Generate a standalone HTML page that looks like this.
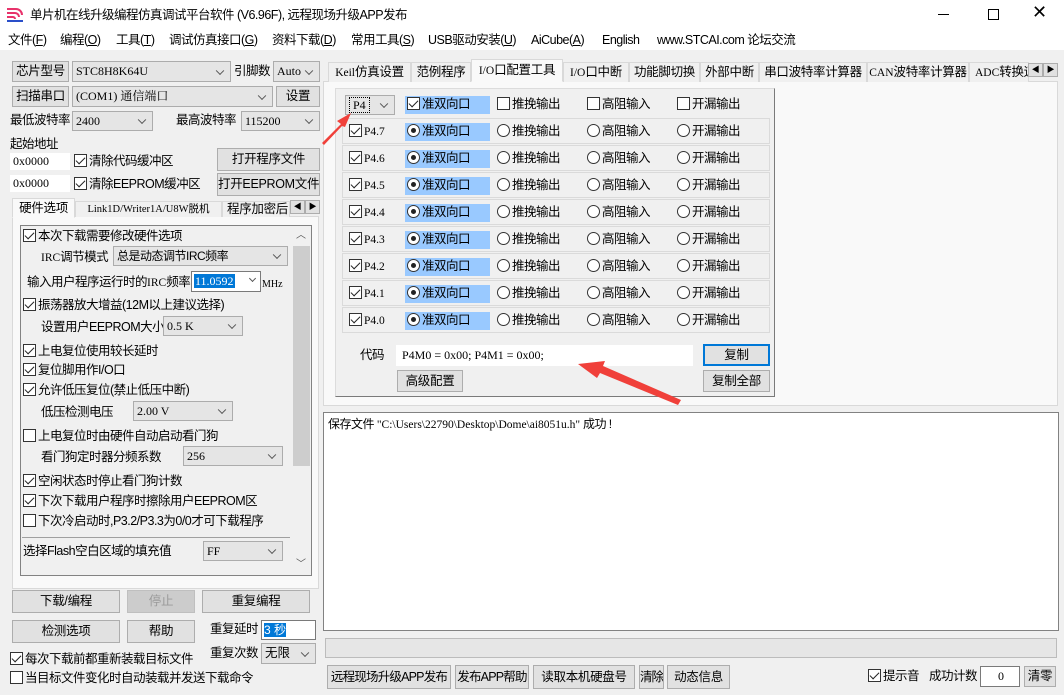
<!DOCTYPE html>
<html><head><meta charset="utf-8">
<style>
*{box-sizing:border-box;margin:0;padding:0}
body{width:1064px;height:695px;overflow:hidden;background:#f0f0f0;font-family:"Liberation Sans","Noto Sans CJK SC",sans-serif;font-size:12.5px;line-height:15px;color:#000;position:relative}
.a{position:absolute;white-space:nowrap;line-height:15px}
.btn{position:absolute;background:#e1e1e1;border:1px solid #adadad;text-align:center;font-size:12.5px;white-space:nowrap;overflow:hidden;letter-spacing:-0.3px}
.cmb{position:absolute;background:#e5e5e5;border:1px solid #acacac;font-family:"Liberation Serif","Noto Serif CJK SC",serif;font-size:12px;padding-left:3px;white-space:nowrap;overflow:hidden}
.cmb:after{content:"";position:absolute;right:7px;top:50%;width:5px;height:5px;border-right:1px solid #555;border-bottom:1px solid #555;transform:translateY(-70%) rotate(45deg)}
.ed{position:absolute;background:#fff;border:1px solid #7a7a7a;font-family:"Liberation Serif",serif;font-size:12px;padding-left:2px;white-space:nowrap}
.cb{display:inline-block;width:13px;height:13px;border:1px solid #333;background:#fff;vertical-align:-2px;position:relative;margin-right:2px}
.cb.k:after{content:"";position:absolute;left:3px;top:0px;width:4px;height:8px;border-right:1.5px solid #222;border-bottom:1.5px solid #222;transform:rotate(45deg)}
.rb{display:inline-block;width:13px;height:13px;border:1px solid #333;border-radius:50%;background:#fff;vertical-align:-2px;position:relative;margin-right:2px}
.rb.k:after{content:"";position:absolute;left:3px;top:3px;width:5px;height:5px;border-radius:50%;background:#222}
.tab{position:absolute;border:1px solid #d9d9d9;border-bottom:none;background:#f0f0f0;text-align:center;font-size:12.5px;top:0;white-space:nowrap;overflow:hidden;letter-spacing:-0.3px}
.row{position:absolute;left:342px;width:428px;height:26px;border:1px solid #dadada}
.sel{position:absolute;background:#99c9ff;height:18px}
.m{font-family:"Liberation Serif",serif;font-size:11.5px;letter-spacing:0}
.n{letter-spacing:-0.5px}
</style></head><body>
<div class="a" style="left:0;top:0;width:1064px;height:30px;background:#fff"></div>
<svg class="a" style="left:6px;top:7px" width="18" height="16"><path d="M1 2h9a6 6 0 0 1 6 6" stroke="#e8336b" stroke-width="2" fill="none"/><path d="M1 6h8a4 4 0 0 1 4 4" stroke="#e8336b" stroke-width="2" fill="none"/><path d="M1 10h6a2 2 0 0 1 2 2" stroke="#e8336b" stroke-width="2" fill="none"/><path d="M1 14h16" stroke="#2a4fc9" stroke-width="2"/></svg>
<div class="a n" style="left:30px;top:8px">单片机在线升级编程仿真调试平台软件 (V6.96F), 远程现场升级APP发布</div>
<div class="a" style="left:938px;top:14px;width:11px;border-top:1px solid #000"></div>
<div class="a" style="left:988px;top:9px;width:11px;height:11px;border:1px solid #000"></div>
<div class="a" style="left:1032px;top:5px;font-size:18px">✕</div>
<div class="a" style="left:0;top:30px;width:1064px;height:20px;background:#fff"></div>
<div class="a n" style="left:8px;top:33px">文件(<u>F</u>)</div>
<div class="a n" style="left:60px;top:33px">编程(<u>O</u>)</div>
<div class="a n" style="left:116px;top:33px">工具(<u>T</u>)</div>
<div class="a n" style="left:169px;top:33px">调试仿真接口(<u>G</u>)</div>
<div class="a n" style="left:272px;top:33px">资料下载(<u>D</u>)</div>
<div class="a n" style="left:351px;top:33px">常用工具(<u>S</u>)</div>
<div class="a n" style="left:428px;top:33px">USB驱动安装(<u>U</u>)</div>
<div class="a n" style="left:531px;top:33px">AiCube(<u>A</u>)</div>
<div class="a n" style="left:602px;top:33px">English</div>
<div class="a n" style="left:657px;top:33px">www.STCAI.com 论坛交流</div>

<div class="btn" style="left:12px;top:61px;width:57px;height:21px;line-height:19px">芯片型号</div>
<div class="cmb" style="left:72px;top:61px;width:159px;height:21px;line-height:19px">STC8H8K64U</div>
<div class="a n" style="left:234px;top:64px">引脚数</div>
<div class="cmb" style="left:273px;top:61px;width:47px;height:21px;line-height:19px">Auto</div>
<div class="btn" style="left:12px;top:86px;width:57px;height:21px;line-height:19px">扫描串口</div>
<div class="cmb" style="left:72px;top:86px;width:201px;height:21px;line-height:19px">(COM1) 通信端口</div>
<div class="btn" style="left:276px;top:86px;width:44px;height:21px;line-height:19px">设置</div>
<div class="a n" style="left:10px;top:113px">最低波特率</div>
<div class="cmb" style="left:72px;top:111px;width:81px;height:20px;line-height:18px">2400</div>
<div class="a n" style="left:176px;top:113px">最高波特率</div>
<div class="cmb" style="left:241px;top:111px;width:79px;height:20px;line-height:18px">115200</div>
<div class="a n" style="left:10px;top:137px">起始地址</div>
<div class="ed" style="left:10px;top:153px;width:60px;height:17px;border-color:#fff;line-height:15px">0x0000</div>
<div class="a n" style="left:74px;top:154px"><span class="cb k"></span>清除代码缓冲区</div>
<div class="btn" style="left:217px;top:148px;width:103px;height:23px;line-height:21px">打开程序文件</div>
<div class="ed" style="left:10px;top:175px;width:60px;height:17px;border-color:#fff;line-height:15px">0x0000</div>
<div class="a n" style="left:74px;top:177px"><span class="cb k"></span>清除EEPROM缓冲区</div>
<div class="btn" style="left:217px;top:173px;width:103px;height:23px;line-height:21px">打开EEPROM文件</div>

<div class="a" style="left:12px;top:216px;width:307px;height:373px;border:1px solid #d9d9d9;background:#f9f9f9"></div>
<div class="tab" style="left:12px;top:198px;width:63px;height:20px;background:#f9f9f9;line-height:18px;border-bottom:1px solid #f9f9f9">硬件选项</div>
<div class="tab m" style="left:75px;top:201px;width:147px;height:16px;line-height:15px;font-size:10.5px">Link1D/Writer1A/U8W脱机</div>
<div class="tab" style="left:222px;top:201px;width:68px;height:16px;line-height:15px;text-align:left;padding-left:4px">程序加密后</div>
<div class="btn" style="left:290px;top:200px;width:15px;height:14px;font-size:8px;line-height:12px">◀</div>
<div class="btn" style="left:305px;top:200px;width:15px;height:14px;font-size:8px;line-height:12px">▶</div>
<div class="a" style="left:20px;top:225px;width:292px;height:351px;border:1px solid #828282;background:#f0f0f0"></div>
<div class="a" style="left:293px;top:246px;width:17px;height:220px;background:#cdcdcd"></div>
<div class="a" style="left:296px;top:228px;font-size:10px;color:#555">︿</div>
<div class="a" style="left:296px;top:557px;font-size:10px;color:#555">﹀</div>
<div class="a n" style="left:23px;top:229px"><span class="cb k"></span>本次下载需要修改硬件选项</div>
<div class="a n" style="left:41px;top:250px"><span class="m">IRC</span>调节模式</div>
<div class="cmb n" style="left:113px;top:246px;width:175px;height:20px;line-height:18px;font-family:'Liberation Sans','Noto Sans CJK SC',sans-serif;font-size:12px">总是动态调节IRC频率</div>
<div class="a n" style="left:27px;top:275px">输入用户程序运行时的<span class="m">IRC</span>频率</div>
<div class="ed" style="left:191px;top:271px;width:70px;height:21px;border-color:#7a7a7a;line-height:19px"><span style="background:#0078d7;color:#fff;padding:0 1px">11.0592</span></div>
<div class="a" style="left:250px;top:276px;width:5px;height:5px;border-right:1px solid #555;border-bottom:1px solid #555;transform:rotate(45deg)"></div>
<div class="a m" style="left:262px;top:277px;font-size:10px">MHz</div>
<div class="a n" style="left:23px;top:298px"><span class="cb k"></span>振荡器放大增益(12M以上建议选择)</div>
<div class="a n" style="left:41px;top:320px">设置用户EEPROM大小</div>
<div class="cmb" style="left:163px;top:316px;width:80px;height:20px;line-height:18px">0.5 K</div>
<div class="a n" style="left:23px;top:344px"><span class="cb k"></span>上电复位使用较长延时</div>
<div class="a n" style="left:23px;top:363px"><span class="cb k"></span>复位脚用作I/O口</div>
<div class="a n" style="left:23px;top:383px"><span class="cb k"></span>允许低压复位(禁止低压中断)</div>
<div class="a n" style="left:41px;top:405px">低压检测电压</div>
<div class="cmb" style="left:133px;top:401px;width:100px;height:20px;line-height:18px">2.00 V</div>
<div class="a n" style="left:23px;top:429px"><span class="cb"></span>上电复位时由硬件自动启动看门狗</div>
<div class="a n" style="left:41px;top:450px">看门狗定时器分频系数</div>
<div class="cmb" style="left:183px;top:446px;width:100px;height:20px;line-height:18px">256</div>
<div class="a n" style="left:23px;top:474px"><span class="cb k"></span>空闲状态时停止看门狗计数</div>
<div class="a n" style="left:23px;top:494px"><span class="cb k"></span>下次下载用户程序时擦除用户EEPROM区</div>
<div class="a n" style="left:23px;top:514px"><span class="cb"></span>下次冷启动时,P3.2/P3.3为0/0才可下载程序</div>
<div class="a" style="left:22px;top:537px;width:268px;border-top:1px solid #a0a0a0"></div>
<div class="a n" style="left:23px;top:544px">选择Flash空白区域的填充值</div>
<div class="cmb" style="left:203px;top:541px;width:80px;height:20px;line-height:18px">FF</div>

<div class="btn" style="left:12px;top:590px;width:108px;height:23px;line-height:21px">下载/编程</div>
<div class="btn" style="left:127px;top:590px;width:68px;height:23px;line-height:21px;color:#9a9a9a;background:#ccc;border-color:#bfbfbf">停止</div>
<div class="btn" style="left:202px;top:590px;width:108px;height:23px;line-height:21px">重复编程</div>
<div class="btn" style="left:12px;top:620px;width:108px;height:23px;line-height:21px">检测选项</div>
<div class="btn" style="left:127px;top:620px;width:68px;height:23px;line-height:21px">帮助</div>
<div class="a n" style="left:210px;top:622px">重复延时</div>
<div class="ed" style="left:261px;top:620px;width:55px;height:20px;line-height:18px;font-family:'Liberation Sans','Noto Sans CJK SC',sans-serif"><span style="background:#0078d7;color:#fff">3 秒</span></div>
<div class="a n" style="left:210px;top:646px">重复次数</div>
<div class="cmb" style="left:261px;top:643px;width:55px;height:21px;line-height:19px;font-family:'Liberation Sans','Noto Sans CJK SC',sans-serif;font-size:12.5px">无限</div>
<div class="a n" style="left:10px;top:652px"><span class="cb k"></span>每次下载前都重新装载目标文件</div>
<div class="a n" style="left:10px;top:671px"><span class="cb"></span>当目标文件变化时自动装载并发送下载命令</div>

<div class="a" style="left:323px;top:81px;width:735px;height:325px;border:1px solid #d9d9d9;background:#f9f9f9"></div>
<div class="tab" style="left:328px;top:62px;width:83px;height:20px;line-height:19px"><span class="m">Keil</span>仿真设置</div>
<div class="tab" style="left:411px;top:62px;width:60px;height:20px;line-height:19px">范例程序</div>
<div class="tab" style="left:471px;top:59px;width:92px;height:23px;line-height:20px;background:#f9f9f9;border-bottom:1px solid #f9f9f9"><span class="m">I/O</span>口配置工具</div>
<div class="tab" style="left:563px;top:62px;width:66px;height:20px;line-height:19px"><span class="m">I/O</span>口中断</div>
<div class="tab" style="left:629px;top:62px;width:71px;height:20px;line-height:19px">功能脚切换</div>
<div class="tab" style="left:700px;top:62px;width:59px;height:20px;line-height:19px">外部中断</div>
<div class="tab" style="left:759px;top:62px;width:108px;height:20px;line-height:19px">串口波特率计算器</div>
<div class="tab" style="left:867px;top:62px;width:102px;height:20px;line-height:19px"><span class="m">CAN</span>波特率计算器</div>
<div class="tab" style="left:969px;top:62px;width:60px;height:20px;line-height:19px;text-align:left;padding-left:5px"><span class="m">ADC</span>转换速</div>
<div class="btn" style="left:1028px;top:63px;width:15px;height:14px;font-size:8px;line-height:12px">◀</div>
<div class="btn" style="left:1043px;top:63px;width:15px;height:14px;font-size:8px;line-height:12px">▶</div>

<div class="a" style="left:335px;top:88px;width:440px;height:309px;border:1px solid;border-color:#dcdcdc #7a7a7a #7a7a7a #dcdcdc;background:#f0f0f0"></div>
<div class="cmb" style="left:345px;top:95px;width:50px;height:20px;line-height:18px"><span style="border:1px dotted #000;padding:0 3px">P4</span></div>
<div class="sel" style="left:405px;top:96px;width:85px"></div>
<div class="a n" style="left:407px;top:97px"><span class="cb k"></span>准双向口</div>
<div class="a n" style="left:497px;top:97px"><span class="cb"></span>推挽输出</div>
<div class="a n" style="left:587px;top:97px"><span class="cb"></span>高阻输入</div>
<div class="a n" style="left:677px;top:97px"><span class="cb"></span>开漏输出</div>

<div class="row" style="top:118px"></div><div class="row" style="top:145px"></div><div class="row" style="top:172px"></div><div class="row" style="top:199px"></div><div class="row" style="top:226px"></div><div class="row" style="top:253px"></div><div class="row" style="top:280px"></div><div class="row" style="top:307px"></div>

<div id="rows"></div>
<script>
var h='';for(var i=0;i<8;i++){var y=124+i*27;
h+='<div class="a" style="left:349px;top:'+y+'px"><span class="cb k"></span><span class="m">P4.'+(7-i)+'</span></div>';
h+='<div class="sel" style="left:405px;top:'+(y-1)+'px;width:85px"></div>';
h+='<div class="a n" style="left:407px;top:'+y+'px"><span class="rb k"></span>准双向口</div>';
h+='<div class="a n" style="left:497px;top:'+y+'px"><span class="rb"></span>推挽输出</div>';
h+='<div class="a n" style="left:587px;top:'+y+'px"><span class="rb"></span>高阻输入</div>';
h+='<div class="a n" style="left:677px;top:'+y+'px"><span class="rb"></span>开漏输出</div>';}
document.getElementById('rows').outerHTML=h;
</script>

<div class="a n" style="left:360px;top:348px">代码</div>
<div class="ed" style="left:396px;top:345px;width:297px;height:21px;border-color:#fff;line-height:19px;padding-left:5px">P4M0 = 0x00; P4M1 = 0x00;</div>
<div class="btn" style="left:703px;top:344px;width:67px;height:22px;line-height:18px;border:2px solid #0078d7">复制</div>
<div class="btn" style="left:397px;top:370px;width:66px;height:22px;line-height:20px">高级配置</div>
<div class="btn" style="left:703px;top:370px;width:67px;height:22px;line-height:20px">复制全部</div>

<div class="a" style="left:323px;top:412px;width:736px;height:219px;background:#fff;border:1px solid #828282"></div>
<div class="a n" style="left:328px;top:417px;font-size:12px">保存文件 <span class="m">"C:\Users\22790\Desktop\Dome\ai8051u.h"</span> 成功 !</div>
<div class="a" style="left:325px;top:638px;width:732px;height:20px;border:1px solid #bcbcbc;background:#e6e6e6"></div>
<div class="btn" style="left:327px;top:665px;width:124px;height:24px;line-height:22px;letter-spacing:-0.8px">远程现场升级APP发布</div>
<div class="btn" style="left:455px;top:665px;width:74px;height:24px;line-height:22px;letter-spacing:-0.8px">发布APP帮助</div>
<div class="btn" style="left:533px;top:665px;width:102px;height:24px;line-height:22px">读取本机硬盘号</div>
<div class="btn" style="left:639px;top:665px;width:25px;height:24px;line-height:22px;letter-spacing:-1px">清除</div>
<div class="btn" style="left:667px;top:665px;width:63px;height:24px;line-height:22px">动态信息</div>
<div class="a n" style="left:868px;top:669px"><span class="cb k"></span>提示音</div>
<div class="a n" style="left:929px;top:669px">成功计数</div>
<div class="ed" style="left:980px;top:666px;width:40px;height:21px;text-align:center;line-height:19px">0</div>
<div class="btn" style="left:1024px;top:666px;width:32px;height:21px;line-height:19px">清零</div>

<svg class="a" style="left:0;top:0" width="1064" height="695">
<polygon points="322,143 341,124 337,121 351,113 345,127 342,126 324,145" fill="#f0403a"/>
<polygon points="678,405 600,373 597,378 578,364 605,361 603,366 681,400" fill="#f0403a"/>
</svg>
</body></html>
